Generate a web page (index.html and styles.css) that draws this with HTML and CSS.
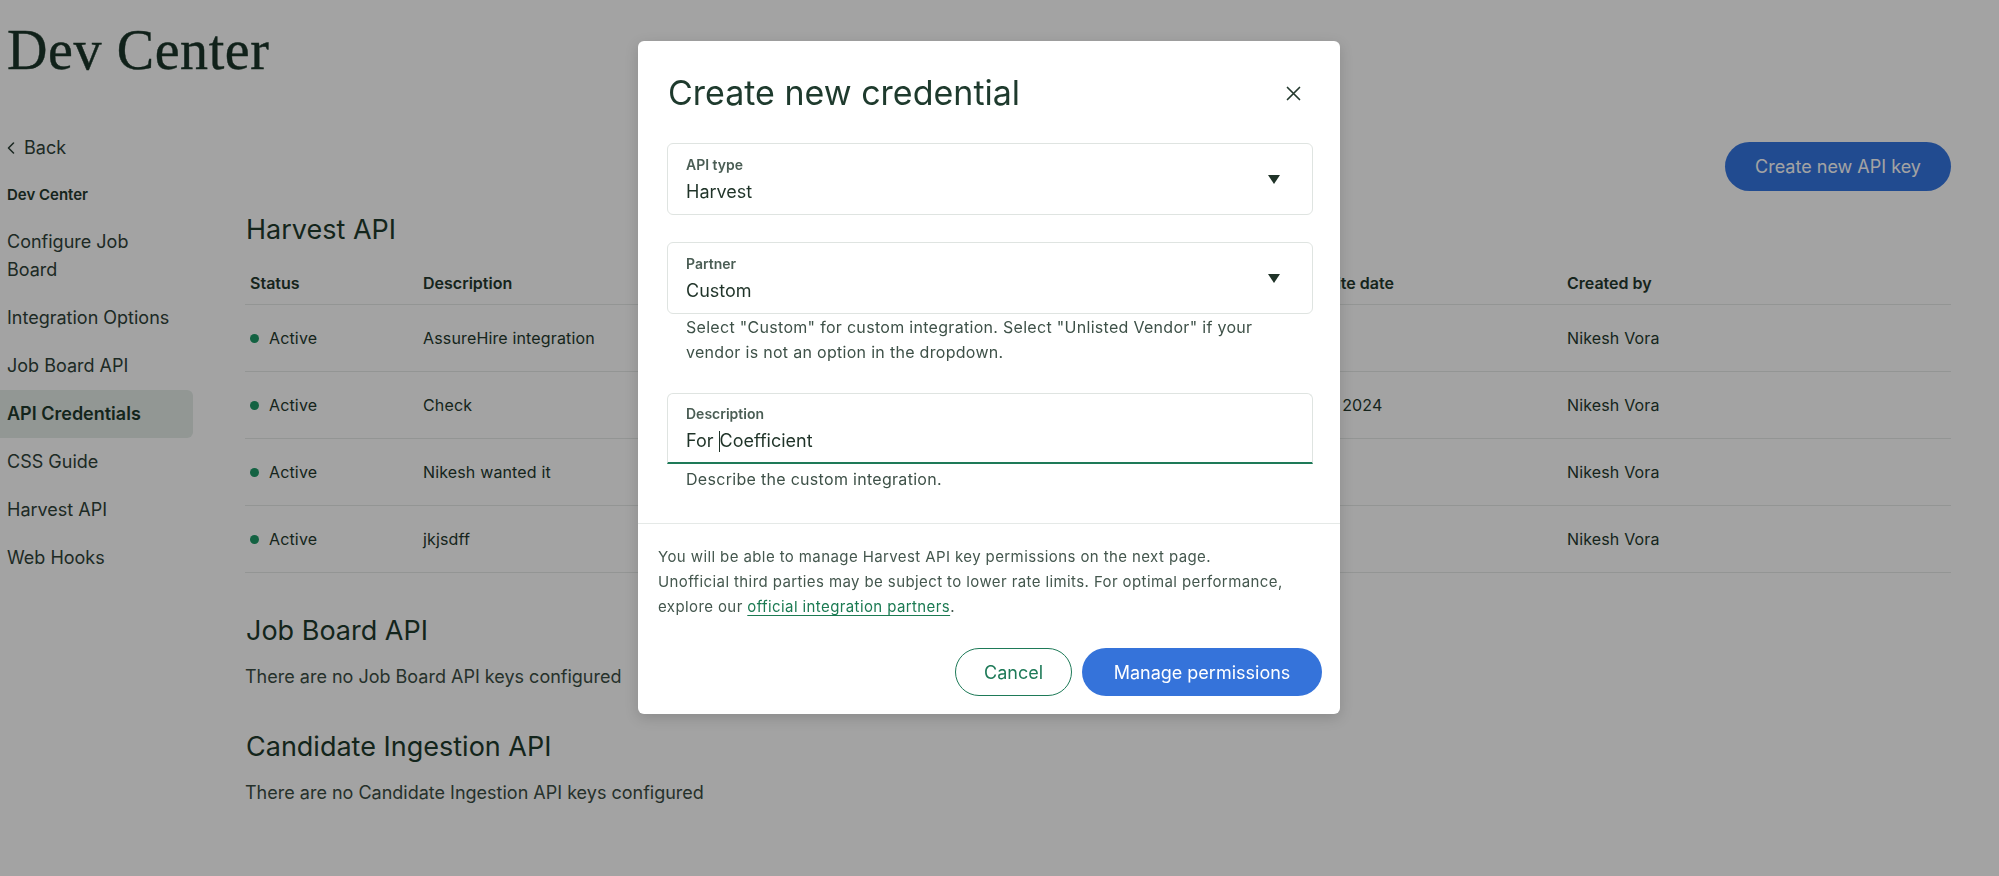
FILE: index.html
```html
<!DOCTYPE html>
<html lang="en">
<head>
<meta charset="utf-8">
<title>Dev Center - API Credentials</title>
<link rel="stylesheet" href="styles.css">
</head>
<body>
<div class="page">
  <h1 class="page-title">Dev Center</h1>
  <div class="layout">
    <nav class="sidebar">
      <a class="nav-item back">
        <svg class="chev" width="10" height="14" viewBox="0 0 10 14"><path d="M7.5 2 L2.5 7 L7.5 12" fill="none" stroke="currentColor" stroke-width="1.6" stroke-linecap="round" stroke-linejoin="round"/></svg>
        <span>Back</span>
      </a>
      <div class="nav-section">Dev Center</div>
      <a class="nav-item">Configure Job<br>Board</a>
      <a class="nav-item">Integration Options</a>
      <a class="nav-item">Job Board API</a>
      <a class="nav-item active">API Credentials</a>
      <a class="nav-item">CSS Guide</a>
      <a class="nav-item">Harvest API</a>
      <a class="nav-item">Web Hooks</a>
    </nav>
    <main class="main">
      <div class="toolbar">
        <button class="btn btn-primary btn-create">Create new API key</button>
      </div>
      <h2 class="section-title">Harvest API</h2>
      <div class="table">
        <div class="row head">
          <div class="cell"><span>Status</span></div>
          <div class="cell"><span>Description</span></div>
          <div class="cell"></div>
          <div class="cell"><span>Last write date</span></div>
          <div class="cell"><span>Created by</span></div>
        </div>
        <div class="row">
          <div class="cell"><span class="dot"></span><span>Active</span></div>
          <div class="cell"><span>AssureHire integration</span></div>
          <div class="cell"></div>
          <div class="cell"></div>
          <div class="cell"><span>Nikesh Vora</span></div>
        </div>
        <div class="row">
          <div class="cell"><span class="dot"></span><span>Active</span></div>
          <div class="cell"><span>Check</span></div>
          <div class="cell"></div>
          <div class="cell"><span>Feb 20, 2024</span></div>
          <div class="cell"><span>Nikesh Vora</span></div>
        </div>
        <div class="row">
          <div class="cell"><span class="dot"></span><span>Active</span></div>
          <div class="cell"><span>Nikesh wanted it</span></div>
          <div class="cell"></div>
          <div class="cell"></div>
          <div class="cell"><span>Nikesh Vora</span></div>
        </div>
        <div class="row">
          <div class="cell"><span class="dot"></span><span>Active</span></div>
          <div class="cell"><span>jkjsdff</span></div>
          <div class="cell"></div>
          <div class="cell"></div>
          <div class="cell"><span>Nikesh Vora</span></div>
        </div>
      </div>
      <h2 class="section-title gap-lg">Job Board API</h2>
      <p class="empty">There are no Job Board API keys configured</p>
      <h2 class="section-title gap-lg">Candidate Ingestion API</h2>
      <p class="empty">There are no Candidate Ingestion API keys configured</p>
    </main>
  </div>
</div>

<div class="overlay"></div>

<div class="modal" role="dialog" aria-label="Create new credential">
  <div class="modal-body">
    <div class="modal-head">
      <h3 class="modal-title">Create new credential</h3>
      <button class="close" aria-label="Close">
        <svg width="15" height="15" viewBox="0 0 15 15"><path d="M1.5 1.5 L13.5 13.5 M13.5 1.5 L1.5 13.5" stroke="currentColor" stroke-width="1.7" stroke-linecap="round"/></svg>
      </button>
    </div>
    <div class="field select">
      <div class="field-label">API type</div>
      <div class="field-value">Harvest</div>
      <span class="arrow"></span>
    </div>
    <div class="field select second">
      <div class="field-label">Partner</div>
      <div class="field-value">Custom</div>
      <span class="arrow"></span>
    </div>
    <p class="helper wrap">Select "Custom" for custom integration. Select "Unlisted Vendor" if your vendor is not an option in the dropdown.</p>
    <div class="field input focused">
      <div class="field-label">Description</div>
      <div class="field-value">For <span class="caret"></span>Coefficient</div>
    </div>
    <p class="helper">Describe the custom integration.</p>
  </div>
  <div class="modal-foot">
    <div class="note">
      <span class="note-line">You will be able to manage Harvest API key permissions on the next page.</span>
      <span class="note-line">Unofficial third parties may be subject to lower rate limits. For optimal performance,</span>
      <span class="note-line"><span>explore our </span><a class="link">official integration partners</a><span>.</span></span>
    </div>
    <div class="actions">
      <button class="btn btn-outline">Cancel</button>
      <button class="btn btn-primary btn-manage">Manage permissions</button>
    </div>
  </div>
</div>
</body>
</html>
```

FILE: styles.css
```css
* { box-sizing: border-box; }

html, body {
  margin: 0;
  padding: 0;
  background: #ffffff;
  font-family: "Inter", "Noto Sans", "Liberation Sans", sans-serif;
  color: #24392e;
}

.page {
  width: 1999px;
  height: 876px;
  overflow: hidden;
}

.page-title {
  margin: 0;
  padding: 22px 0 0 7px;
  font-family: "Liberation Serif", "DejaVu Serif", serif;
  font-weight: 400;
  font-size: 56px;
  line-height: 56px;
  letter-spacing: 0.6px;
  color: #1a3529;
  -webkit-text-stroke: 0.4px #1a3529;
}

.layout {
  display: grid;
  grid-template-columns: 193px 1fr;
  column-gap: 52px;
  margin-top: 46px;
  padding-right: 48px;
}

/* Sidebar */
.sidebar {
  display: flex;
  flex-direction: column;
}

.nav-item {
  display: block;
  padding: 10px 7px;
  font-size: 18px;
  line-height: 28px;
  color: #2f4239;
  border-radius: 6px;
}

.nav-item.back {
  display: flex;
  align-items: center;
  gap: 8px;
  padding-left: 6px;
}

.chev { color: #2f4239; }

.nav-section {
  padding: 9px 7px;
  font-size: 15px;
  line-height: 28px;
  font-weight: 600;
  color: #24392e;
}

.nav-item.active {
  background: #e4ece8;
  font-weight: 600;
  color: #1e3a2d;
  border-radius: 0 6px 6px 0;
}

/* Main */
.main {
  display: flex;
  flex-direction: column;
}

.toolbar {
  display: flex;
  justify-content: flex-end;
  margin-top: 18px;
}

.btn {
  font-family: inherit;
  font-size: 18px;
  border-radius: 999px;
  height: 48px;
  cursor: pointer;
}

.btn-primary {
  background: #3573da;
  color: #ffffff;
  border: none;
}

.btn-create {
  width: 226px;
  height: 49px;
  background: #3576e2;
}

.section-title {
  margin: 23px 0 0 1px;
  font-size: 27px;
  line-height: 32px;
  font-weight: 400;
  color: #1e3a2d;
}

.section-title.gap-lg {
  margin-top: 42px;
}

.table {
  margin-top: 15px;
  display: flex;
  flex-direction: column;
}

.row {
  display: grid;
  grid-template-columns: 173px 417px 440px 287px 1fr;
  align-items: center;
  height: 66px;
  border-bottom: 1px solid #e6eae8;
  font-size: 16px;
  letter-spacing: 0.15px;
  color: #24392e;
}

.row + .row { height: 67px; }

.row.head {
  height: 44px;
  font-weight: 600;
  letter-spacing: 0;
}

.cell {
  padding: 0 5px;
  display: flex;
  align-items: center;
  white-space: nowrap;
}

.dot {
  width: 9px;
  height: 9px;
  border-radius: 50%;
  background: #1f9a68;
  margin-right: 10px;
}

.empty {
  margin: 18px 0 0 0;
  font-size: 18px;
  line-height: 24px;
  color: #3b4d44;
}

/* Overlay */
.overlay {
  position: fixed;
  inset: 0;
  background: rgba(0, 0, 0, 0.36);
}

/* Modal */
.modal {
  position: absolute;
  left: 638px;
  top: 41px;
  width: 702px;
  height: 673px;
  background: #ffffff;
  border-radius: 6px;
  box-shadow: 0 4px 14px rgba(0, 0, 0, 0.15);
  display: flex;
  flex-direction: column;
}

.modal-body {
  padding: 32px 27px 31px 29px;
  border-bottom: 1px solid #e5e9e7;
}

.modal-head {
  display: flex;
  justify-content: space-between;
  align-items: center;
}

.modal-title {
  margin: 0 0 0 1px;
  font-size: 34px;
  line-height: 40px;
  font-weight: 400;
  color: #1e3a2d;
}

.close {
  border: none;
  background: none;
  padding: 0;
  width: 15px;
  height: 15px;
  margin-right: 12px;
  color: #24392e;
  display: flex;
}

.field {
  position: relative;
  margin-top: 30px;
  height: 72px;
  border: 1px solid #dfe4e1;
  border-radius: 6px;
  padding: 12px 18px 0 18px;
}

.field.second { margin-top: 27px; }

.field-label {
  font-size: 14px;
  line-height: 18px;
  font-weight: 600;
  color: #4a5d54;
}

.field-value {
  margin-top: 5px;
  font-size: 18px;
  line-height: 26px;
  color: #1f3328;
  display: flex;
  align-items: center;
  white-space: pre;
}

.arrow {
  position: absolute;
  right: 32px;
  top: 31px;
  width: 0;
  height: 0;
  border-left: 6px solid transparent;
  border-right: 6px solid transparent;
  border-top: 9px solid #1f3328;
}

.helper {
  margin: 1px 0 0 19px;
  font-size: 16px;
  line-height: 25px;
  letter-spacing: 0.3px;
  color: #3e5148;
}

.helper.wrap {
  max-width: 590px;
}

.field.input {
  margin-top: 28px;
  height: 71px;
  border-radius: 6px 6px 0 0;
  border-bottom: 2px solid #1e7a58;
  padding-top: 11px;
}

.caret {
  display: inline-block;
  width: 1px;
  height: 21px;
  background: #1f3328;
}

.field.input + .helper { margin-top: 3px; }

.modal-foot {
  padding: 20px 18px 18px 20px;
  display: flex;
  flex-direction: column;
  flex: 1;
}

.note {
  display: flex;
  flex-direction: column;
  font-size: 15px;
  line-height: 25px;
  letter-spacing: 0.4px;
  color: #44574e;
}

.note-line {
  display: block;
  white-space: nowrap;
}

.link {
  color: #1b7a52;
  text-decoration: underline;
  text-underline-offset: 3px;
}

.actions {
  margin-top: auto;
  display: flex;
  justify-content: flex-end;
  gap: 10px;
}

.btn-outline {
  width: 117px;
  background: #ffffff;
  border: 1px solid #1e7a58;
  color: #1e7a58;
}

.btn-manage {
  width: 240px;
}
```
